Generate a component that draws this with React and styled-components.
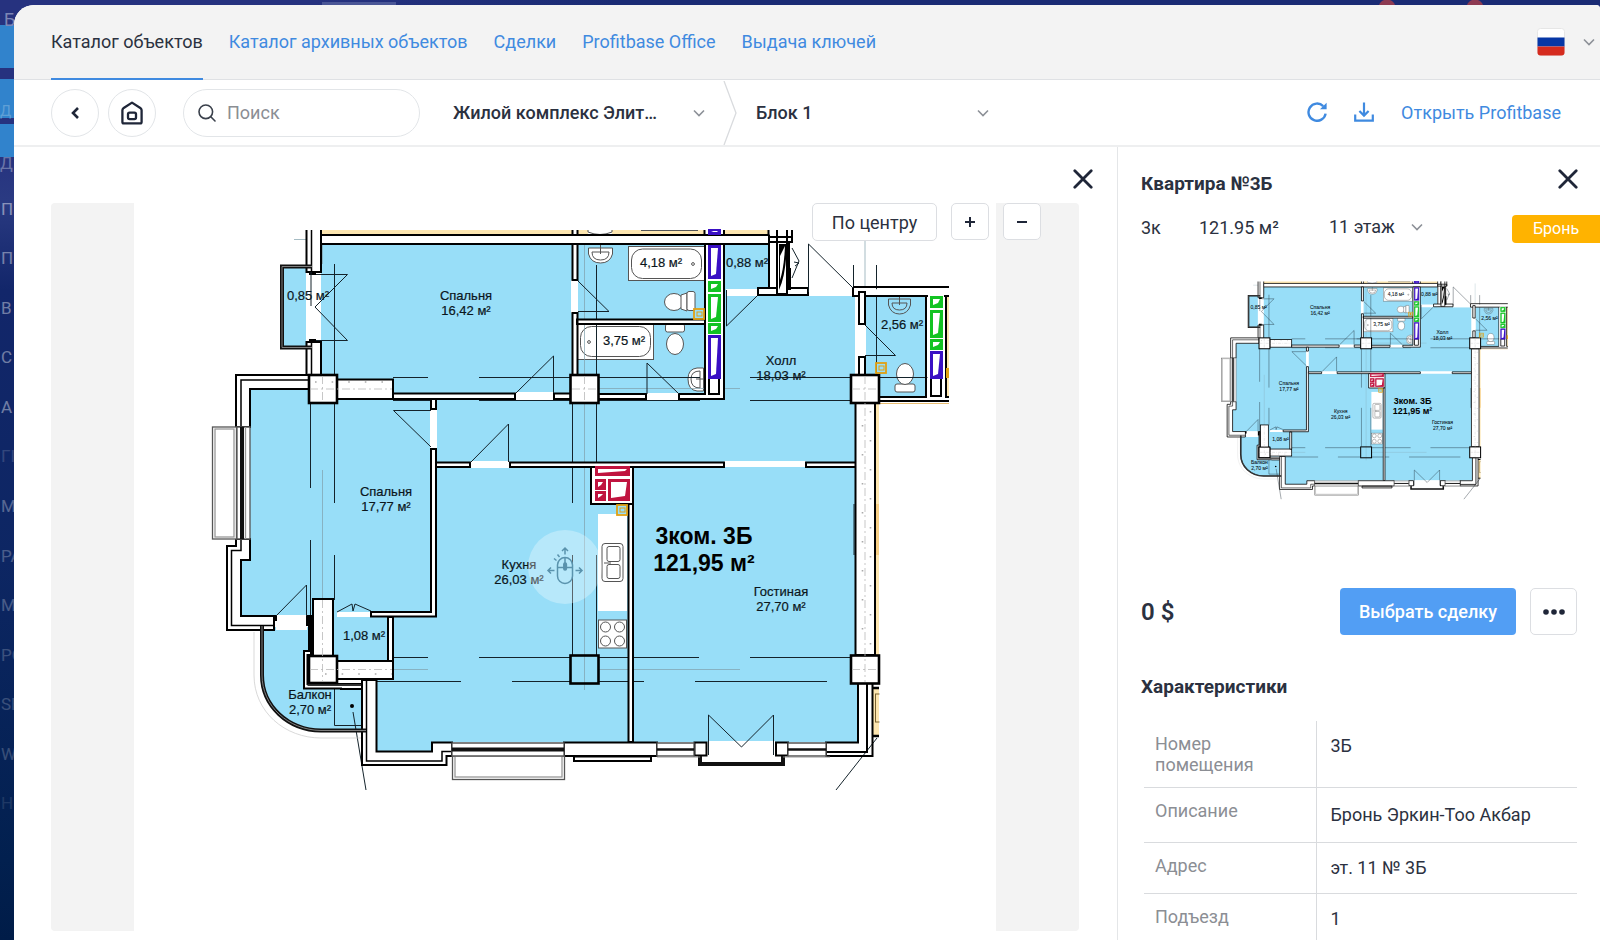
import React from 'react'
import styled, { createGlobalStyle } from 'styled-components'

const TABS = ['Каталог архивных объектов', 'Сделки', 'Profitbase Office', 'Выдача ключей']

const MENU = [
  { text: 'П', opacity: 0.45 },
  { text: 'П', opacity: 0.4 },
  { text: 'В', opacity: 0.4 },
  { text: 'С', opacity: 0.4 },
  { text: 'А', opacity: 0.4 },
  { text: 'ГІ', opacity: 0.15 },
  { text: 'М', opacity: 0.3 },
  { text: 'РА', opacity: 0.25 },
  { text: 'М', opacity: 0.25 },
  { text: 'РО', opacity: 0.2 },
  { text: 'SE', opacity: 0.2 },
  { text: 'W', opacity: 0.2 },
  { text: 'Н', opacity: 0.1 },
]

const ROWS = [
  { label: 'Номер помещения', value: '3Б' },
  { label: 'Описание', value: 'Бронь Эркин-Тоо Акбар', tall: true },
  { label: 'Адрес', value: 'эт. 11 № 3Б' },
  { label: 'Подъезд', value: '1' },
]

const Chevron = () => (
  <svg width="12" height="8" viewBox="0 0 12 8" fill="none" stroke="#8d9198" strokeWidth="1.6">
    <path d="M1 1.5 L6 6.5 L11 1.5" />
  </svg>
)

const CloseIcon = () => (
  <svg width="20" height="20" viewBox="0 0 20 20" stroke="#1f2638" strokeWidth="2.8" strokeLinecap="round">
    <path d="M1.8 1.8 L18.2 18.2 M18.2 1.8 L1.8 18.2" />
  </svg>
)

const BackIcon = () => (
  <svg width="8" height="12" viewBox="0 0 8 12" fill="none" stroke="#1f2638" strokeWidth="2.6">
    <path d="M7 1 L2 6 L7 11" />
  </svg>
)

const HomeIcon = () => (
  <svg width="22" height="24" viewBox="0 0 22 24" fill="none" stroke="#1f2638" strokeWidth="2.3" strokeLinejoin="round">
    <path d="M1.4 9.2 Q1.4 8 2.3 7.3 L11 1.6 L19.7 7.3 Q20.6 8 20.6 9.2 V21 Q20.6 22.4 19.2 22.4 H2.800 Q1.4 22.4 1.4 21 Z" />
    <rect x="7" y="11.6" width="8" height="6.6" rx="1.6" />
  </svg>
)

const SearchIcon = () => (
  <svg width="18" height="18" viewBox="0 0 18 18" fill="none" stroke="#3a404b" strokeWidth="1.6" strokeLinecap="round">
    <circle cx="7.8" cy="7.8" r="6.8" />
    <path d="M12.8 12.8 L17 17" />
  </svg>
)

const RefreshIcon = () => (
  <svg width="20" height="20" viewBox="0 0 20 20" fill="none" stroke="#3f8ae0" strokeWidth="2.4">
    <path d="M18.6 11.6 A8.6 8.6 0 1 1 16.2 4.1" />
    <path d="M19.6 0.8 V7.2 H13 Z" fill="#3f8ae0" stroke="none" />
  </svg>
)

const DownloadIcon = () => (
  <svg width="20" height="20" viewBox="0 0 20 20" fill="none" stroke="#3f8ae0" strokeWidth="2.2">
    <path d="M1.2 12.6 V18.6 H18.8 V12.6 M10 0.6 V13.4 M5.4 9 L10 13.6 L14.6 9" />
  </svg>
)

const DotsIcon = () => (
  <svg width="22" height="6" viewBox="0 0 22 6" fill="#1f2638">
    <circle cx="3" cy="3" r="2.8" />
    <circle cx="11" cy="3" r="2.8" />
    <circle cx="19" cy="3" r="2.8" />
  </svg>
)

const FlagIcon = () => (
  <svg width="28" height="28" viewBox="0 0 28 28">
    <rect x="0.5" y="0.5" width="27" height="27" rx="3" fill="#fff" stroke="#e6e6e6" />
    <path d="M0.5 9.5 H27.5 V18.5 H0.5 Z" fill="#0737a6" />
    <path d="M0.5 18.5 H27.5 V24.5 Q27.5 27.5 24.5 27.5 H3.5 Q0.5 27.5 0.5 24.5 Z" fill="#d52b1e" />
  </svg>
)

const MouseIcon = () => (
  <svg width="38" height="42" viewBox="0 0 38 42" fill="none" stroke="#5a93ad" strokeWidth="1.5">
    <rect x="11.5" y="11.5" width="15" height="26" rx="7.5" />
    <path d="M11.5 21.5 H26.5 M19 11.5 V24" />
    <rect x="17.8" y="17" width="2.6" height="7" rx="1.2" fill="#5a93ad" />
    <path d="M19 8.5 V2 M16 5 L19 2 L22 5 M8.5 24.5 H2 M5 21.5 L2 24.5 L5 27.5 M29.5 24.5 H36 M33 21.5 L36 24.5 L33 27.5" />
    <path d="M8 12.5 L10.5 14.5 M11.5 8.5 L13.5 11" />
  </svg>
)

// Ventilation shaft: coloured frame with a slanted highlight
const Shaft = ({ x, y, w, h, color }) => (
  <g>
    <rect x={x} y={y} width={w} height={h} fill={color} />
    <path d={`M${x + 2} ${y + 2} H${x + w - 2} L${x + w - 4} ${y + h - 4} L${x + 2} ${y + h - 2} Z`} fill="#fff" />
    <rect x={x} y={y} width={w} height={h} fill="none" stroke={color} strokeWidth="2" />
  </g>
)

const Sensor = ({ x, y }) => (
  <g fill="none" stroke="#e0a012">
    <rect x={x + 1} y={y + 1} width="10" height="10" strokeWidth="1.8" />
    <rect x={x + 4} y={y + 4} width="5" height="4" strokeWidth="1" />
  </g>
)

const Label = ({ x, y, lines }) => (
  <text x={x} y={y}>
    {lines.map((line, i) => (
      <tspan key={line} x={x} dy={i ? 15 : 0}>{line}</tspan>
    ))}
  </text>
)

const FloorPlan = () => (
  <PlanSvg viewBox="134 203 862 728" role="img" aria-label="План квартиры">
    <rect x="134" y="203" width="862" height="728" fill="#fff" />

    {/* rooms */}
    <g fill="#98def8">
      <path d="M320 244 H768 V296 H855 V655 H858 V742 H432 V752 H376 V680 H333 V616 H241 V560 H250 V389 H320 Z" />
      <path d="M866 296 H926 V397 H866 Z" />
      <path d="M282 266 H308 V348 H282 Z" />
      <path d="M262 627 H309 V684 H362 V730 H321 C288 730 262 706 262 675 Z" />
    </g>

    {/* neighbouring flats */}
    <g fill="#fde6b0">
      <path d="M321 230 H572 V235 H321 Z M578 230 H588 V235 H578 Z M612 230 H704 V235 H612 Z M724 230 H768 V235 H724 Z" />
      <path d="M876 404 H879 V655 H876 Z M873 688 H879 V737 H873 Z M946 296 H949 V397 H946 Z" />
    </g>
    <path d="M876 504 H879 V555 H876 Z" fill="#f7cf86" />
    <path d="M879 403.5 H949" stroke="#e8bd72" />

    {/* plumbing */}
    <g fill="#fff" stroke="#555" strokeWidth="1">
      <path d="M588 230 V232 Q600 237 612 232 V230 M641 230.5 H698" />
      <path d="M588.5 248 H612.5 V254 Q610 263 600.5 263 Q591 263 588.5 254 Z" />
      <path d="M592 252 H609 Q609 260 600.5 260 Q592 260 592 252 Z M600.5 244 V254" />
      <rect x="628.5" y="246.5" width="76" height="34" />
      <rect x="631.5" y="249" width="70" height="29.5" rx="11" />
      <circle cx="693" cy="264" r="1.4" />
      <ellipse cx="674" cy="302" rx="9.5" ry="8.5" />
      <path d="M681 295 L687 293 V311 L681 309 Z" />
      <rect x="687" y="291.5" width="8" height="19" rx="2" />
      <rect x="577.5" y="324.5" width="76" height="35" />
      <rect x="580.5" y="326.5" width="70" height="30" rx="11" />
      <circle cx="589" cy="342" r="1.4" />
      <rect x="665.5" y="324" width="19" height="8" rx="2" />
      <ellipse cx="675" cy="344" rx="8.5" ry="10.5" />
      <path d="M703.5 368 H697 Q688 369 688 379 Q688 390 697 391 H703.5 Z" />
      <path d="M700 371 Q691 371 691 379 Q691 388 700 388 Z M696 379 H705" />
      <rect x="895" y="384" width="20" height="8" rx="2" />
      <ellipse cx="905" cy="374" rx="8.5" ry="10.5" />
      <path d="M888.5 299 H910.5 V305 Q908 314 899.5 314 Q891 314 888.5 305 Z" fill="#98def8" />
      <path d="M892 303 H907 Q907 310 899.5 310 Q892 310 892 303 Z M899.5 297 V305" fill="#98def8" />
      <path d="M598 514 H627 V611 H598 Z" stroke="none" />
      <rect x="602" y="543.5" width="21" height="38" rx="3" />
      <rect x="607" y="546.5" width="13" height="15" rx="2" />
      <rect x="607" y="564.5" width="13" height="14" rx="2" />
      <path d="M604 563 H611" />
      <rect x="598.5" y="620" width="28" height="28" />
      <circle cx="605.5" cy="627" r="5" />
      <circle cx="619.5" cy="627" r="5" />
      <circle cx="605.5" cy="641" r="5" />
      <circle cx="619.5" cy="641" r="5" />
    </g>

    {/* axes */}
    <g fill="none" stroke="#14232b" strokeWidth="1">
      <path d="M334.5 264 V503 M334.5 555 V600 M310.5 272 V306 M310.5 403 V488 M310.5 540 V616" />
      <path d="M393 377.5 H428 M479 377.5 H578 M393 400.5 H430 M479 400.5 H570 M560 377.5 H700 M599 400.5 H700" />
      <path d="M750 377.5 H851 M750 400.5 H851 M879 377.5 H930 M853.5 265 V287 M876.5 265 V375" />
      <path d="M596.5 265 V503 M572.5 403 V503 M572.5 555 V655 M596.5 555 V655 M854 504 V555" />
      <path d="M393 657.5 H428 M479 657.5 H570 M599 657.5 H699 M750 657.5 H851" />
      <path d="M377 681.5 H461 M512 681.5 H570 M599 681.5 H644 M695 681.5 H827" />
      <path d="M334.5 688 V725.5 H362 M353 712 L366 790 M877 738 L836 790" />
    </g>
    <g fill="none" stroke="#7f9faa" strokeWidth="0.7">
      <path d="M294 239.5 H323 M322.5 235 V264 M322.5 470 V600 M584.5 235 V375 M584.5 403 V690 M599 388.5 H740" />
      <path d="M393 669.5 H428 M599 669.5 H740 M320 389 H393 M865 235 V286" />
      <path d="M254 632 V675 C254 712 285 738 321 738 H362" stroke="#c9c9c9" />
    </g>
    <circle cx="352" cy="706" r="2" />

    {/* door openings */}
    <g fill="#fff">
      <path d="M306 272 H321 V342 H306 Z M571 280 H578 V313 H571 Z M515 392 H554 V400 H515 Z M430 409 H437 V449 H430 Z" />
      <path d="M470 461 H510 V468 H470 Z M646 393 H679 V400 H646 Z M726 289 H758 V296 H726 Z M808 286 H853 V296 H808 Z" />
      <path d="M724 461 H806 V467 H724 Z M858 324 H866 V357 H858 Z M276 615 H307 V630 H276 Z M337 612 H371 V617 H337 Z M708 741 H775 V756 H708 Z" />
    </g>

    {/* walls */}
    <g fill="#fff" stroke="#000" strokeWidth="2">
      <path d="M320 235 H769 V244 H320 Z" />
      <path d="M306.5 230 V272 H321 V244 V230" />
      <path d="M306.5 375 V342 H321 V375" />
      <path d="M311.5 230 V272 M311.5 342 V375" strokeWidth="1.5" />
      <path d="M309 375 H236 V427 H250 V389 H309 Z" />
      <path d="M309 380 H241 V427" fill="none" strokeWidth="1.5" />
      <path d="M236 539 H250 V560 H241 V616 H274 V630 H227 V546 H236 Z" />
      <path d="M241 539 V550.5 H231.5 V625.5 H274" fill="none" strokeWidth="1.5" />
      <path d="M309 616 H312 V656 H337 V684 H362 V689 H341 V688.5 H304 V651 H309 Z" />
      <path d="M307.5 685 V655 H311 V616" fill="none" />
      <path d="M307.5 685 H362" fill="none" stroke="#333" />
      <path d="M362 680 H376.5 V751.5 H432 V742.5 H452 V756 H446.5 V765 H362 Z" />
      <path d="M366.5 680 V761 H442 V751.5 H452" fill="none" strokeWidth="1.5" />
      <rect x="313" y="599" width="20" height="58" />
      <rect x="337" y="661" width="56" height="18" />
      <rect x="337" y="379.5" width="56" height="19.5" />
      <path d="M393 393.5 H515 V399 H393 Z M554 393.5 H571 V399 H554 Z" />
      <path d="M431 399 H436 V409 H431 Z M431 449 H436 V616.5 H371 V612 H431 Z M388 617 H393 V661 H388 Z" />
      <path d="M436 462.5 H470 V467 H436 Z M510 462.5 H724 V467 H510 Z M806 462.5 H856 V467 H806 Z" />
      <path d="M572.5 244 H577.5 V280 H572.5 Z M572.5 313 H577.5 V375 H572.5 Z M577 319.5 H705 V324 H577 Z" />
      <path d="M705 244 H724 V399 H679 V394 H705 Z" />
      <path d="M577 394 H646 V399 H577 Z" />
      <path d="M572.5 230 V235 M577.5 230 V235 M704.5 230 V235 M724 230 V235 M768.5 230 V235" />
      <path d="M769 235 V294 H777 V230" />
      <path d="M758 288 H808 V295 H758 Z" />
      <path d="M769 237 H792 V242 H769 Z M777 230 V294 H787 V230 M792 230 V242 M789 242 V288" />
      <path d="M853 287 H949 M949 296 H853 V287" />
      <path d="M859 292 H865 V324 H859 Z M859 357 H865 V375 H859 Z" />
      <path d="M926 296 V397 H879 M879 401 H949 M930 296 V397 M946 296 V397 H949" fill="none" />
      <path d="M927.5 297 H929 V396 H927.5 Z" stroke="none" />
      <path d="M930 296 H942 V396 H930 Z" stroke="#fff" strokeWidth="4" />
      <path d="M709 378 H719 V394 H709 Z M931 378 H941 V396 H931 Z" />
      <path d="M591 467 H633 V504 H591 Z" />
      <path d="M628.5 504 H633 V742 H628.5 Z" />
      <path d="M855.5 403 H875 V655 H855.5 Z" />
      <path d="M858 683 H867 V752 H826 V742.5 H858 Z" />
      <path d="M826 742.5 V756 H872.5 V683" fill="none" />
      <path d="M564 742.5 H657 V756 H564 Z M574 756.5 H651 V761 H574 Z" />
      <rect x="694.5" y="742.5" width="12" height="13" />
      <rect x="776" y="742.5" width="12" height="13" />
    </g>
    <path d="M779 244 H787 Q786 275 779 290 Z M787 268 H791 V290 H787 Z" />
    <path d="M780 256 L785 246 Q784 268 780 280 Z" fill="#fff" />
    <path d="M873 736 H879 M872 688 H879" stroke="#000" strokeWidth="2.5" />
    <rect x="875.5" y="694" width="5" height="28" fill="none" stroke="#7a6230" />
    <path d="M879.5 684 H886 V740 H879.5 Z" fill="#fff" />

    {/* columns */}
    <g fill="#fff" stroke="#000" strokeWidth="2.6">
      <rect x="309" y="375" width="28" height="28" />
      <rect x="570.5" y="375" width="28" height="28" />
      <rect x="851" y="375" width="28" height="28" />
      <rect x="309" y="656" width="28" height="27" />
      <rect x="851" y="655.5" width="28" height="28" />
      <rect x="570.5" y="655.5" width="28" height="28" fill="none" />
    </g>
    <g stroke="#b9b9b9" strokeWidth="0.8" strokeDasharray="8 3 2 3" fill="none">
      <path d="M322.5 376 V402 M310 389 H392 M584.5 376 V402 M572 389 H598 M865 376 V682 M852 389 H878" />
      <path d="M322.5 600 V682 M310 669.5 H392 M852 669.5 H878" />
    </g>
    <g stroke="#aaa" strokeWidth="1.6" strokeDasharray="1.6 27.4" fill="none">
      <path d="M870.5 411 V654 M862.5 425 V654" />
      <path d="M315 382 H392 M325 674 H392" strokeDasharray="1.6 15" />
    </g>

    {/* glazing */}
    <g fill="#fff" stroke="#555" strokeWidth="1.3">
      <rect x="212.5" y="427" width="24" height="112" />
      <rect x="215" y="429" width="19" height="108" stroke="#999" />
      <rect x="452.5" y="756" width="112" height="23.5" />
      <rect x="455" y="756" width="107" height="21" stroke="#999" />
      <path d="M237 427 H250 V539 H237 Z M452 743 H564 V756 H452 Z M657 743 H694 V756 H657 Z M788 743 H826 V756 H788 Z" />
      <path d="M245.5 427 V539" stroke="#999" />
    </g>
    <g fill="none" stroke="#111" strokeWidth="4">
      <path d="M242 427 V539 M452 749.5 H564" />
      <path d="M657 749.5 H694 M788 749.5 H826" strokeWidth="2.5" />
      <path d="M700 756 V764 H783 V756" />
      <path d="M312 266.5 H282 V347.5 H312" />
      <path d="M262 626 V675 C262 706 288 730 321 730.5 H366" />
    </g>
    <g fill="none" stroke="#8a8a8a" strokeWidth="0.9">
      <path d="M312 266.5 H282 V347.5 H312 M262 626 V675 C262 706 288 730 321 730.5 H366" />
      <path d="M657 757 H700 M783 757 H830" />
    </g>
    <path d="M273 615 H277 V621 H273 Z M306 615 H310 V626 H306 Z M309 271 H316 V275 H309 Z M309 339 H316 V343 H309 Z" />

    {/* door leaves */}
    <g fill="none" stroke="#14232b" strokeWidth="1">
      <path d="M316 274.5 H347.5 L315 307 L347.5 340.5 H316 M311 272 V306" />
      <path d="M516 393 L553.5 356 V393 M431 410.5 H393.5 L431 447 M471 462 L508.5 424 V462" />
      <path d="M578 281 L609 311.5 H578 M647 394 V363 L679 394 M726.5 290 V326 L757 296" />
      <path d="M808.5 292 V244 L853 288 M865 325 L895.5 355.5 H865" />
      <path d="M276 616 L306.5 585 V616 M337 612 L352 604 L353 611 L355 604 L371 611" />
      <path d="M708.5 755 V715 L741.5 747 L773.5 715 V755" />
      <path d="M792 248 L799 261 L792 278 M794 262 L799 263 L795 266" />
    </g>

    {/* shafts */}
    <Shaft x={709} y={246} w={11} h={32} color="#3a10c4" />
    <Shaft x={709} y={230} w={11} h={4} color="#3a10c4" />
    <Shaft x={709} y={282} w={11} h={9} color="#12c322" />
    <Shaft x={709} y={295} w={11} h={26} color="#12c322" />
    <Shaft x={709} y={324} w={11} h={9} color="#12c322" />
    <Shaft x={709} y={336} w={11} h={42} color="#3a10c4" />
    <Shaft x={931} y={297} w={11} h={10} color="#12c322" />
    <Shaft x={931} y={311} w={11} h={26} color="#12c322" />
    <Shaft x={931} y={340} w={11} h={9} color="#12c322" />
    <Shaft x={931} y={352} w={11} h={26} color="#3a10c4" />
    <Shaft x={596} y={467} w={33} h={8} color="#c0143f" />
    <Shaft x={596} y={480} w={9} h={9} color="#c0143f" />
    <Shaft x={596} y={492} w={9} h={8} color="#c0143f" />
    <Shaft x={609} y={480} w={20} h={20} color="#c0143f" />
    <Sensor x={693} y={308} />
    <Sensor x={875} y={362} />
    <Sensor x={616} y={504} />
    <path d="M946 368 H949 V378 H946 Z" fill="#e0a012" />

    {/* captions */}
    <g fontFamily="'Liberation Sans', Arial, sans-serif" fontSize="13" textAnchor="middle" fill="#0b161c" stroke="#0b161c" strokeWidth="0.2">
      <Label x={308} y={300} lines={['0,85 м²']} />
      <Label x={466} y={300} lines={['Спальня', '16,42 м²']} />
      <Label x={661} y={267} lines={['4,18 м²']} />
      <Label x={747} y={267} lines={['0,88 м²']} />
      <Label x={624} y={345} lines={['3,75 м²']} />
      <Label x={902} y={329} lines={['2,56 м²']} />
      <Label x={781} y={365} lines={['Холл', '18,03 м²']} />
      <Label x={386} y={496} lines={['Спальня', '17,77 м²']} />
      <Label x={519} y={569} lines={['Кухня', '26,03 м²']} />
      <Label x={364} y={640} lines={['1,08 м²']} />
      <Label x={310} y={699} lines={['Балкон', '2,70 м²']} />
      <Label x={781} y={596} lines={['Гостиная', '27,70 м²']} />
      <g fontSize="23" fontWeight="700" fill="#000" stroke="none">
        <text x="704" y="544">3ком. 3Б</text>
        <text x="704" y="571">121,95 м²</text>
      </g>
    </g>
  </PlanSvg>
)

const SelectBox = ({ label, width, children }) => (
  <SelectWrap $width={width}>
    <Select aria-label={label}>
      <option>{children}</option>
    </Select>
    <Chevron />
  </SelectWrap>
)

const App = () => {
  return (
    <Shell>
      <GlobalStyle />
      <Sidebar>
        <SideTop>Б</SideTop>
        <SideTile $height={43} $gap={0} />
        <SideTile $height={39} $gap={11}>Д</SideTile>
        <SideTile $height={33} $gap={6} />
        <SideMark>Д</SideMark>
        <SideMenu>
          {MENU.map((item, i) => (
            <SideItem key={i} $opacity={item.opacity}>{item.text}</SideItem>
          ))}
        </SideMenu>
      </Sidebar>

      <Modal>
        <Header>
          <Tabs>
            <Tab href="#" $active>Каталог объектов</Tab>
            {TABS.map((tab) => (
              <Tab href="#" key={tab}>{tab}</Tab>
            ))}
          </Tabs>
          <LangButton aria-label="Язык">
            <FlagIcon />
            <Chevron />
          </LangButton>
        </Header>

        <Toolbar>
          <RoundButton aria-label="Назад"><BackIcon /></RoundButton>
          <RoundButton aria-label="Домой"><HomeIcon /></RoundButton>
          <SearchBox>
            <SearchIcon />
            <SearchInput type="search" placeholder="Поиск" aria-label="Поиск" />
          </SearchBox>
          <SelectBox label="Проект" width={252}>Жилой комплекс Элит…</SelectBox>
          <Separator width="15" height="64" viewBox="0 0 15 64" fill="none" stroke="#d9dbde" strokeWidth="1.3">
            <path d="M1 0 L13 32 L1 64" />
          </Separator>
          <SelectBox label="Дом" width={233}>Блок 1</SelectBox>
          <ToolbarActions>
            <IconButton aria-label="Обновить"><RefreshIcon /></IconButton>
            <IconButton aria-label="Скачать"><DownloadIcon /></IconButton>
            <OpenLink href="#">Открыть Profitbase</OpenLink>
          </ToolbarActions>
        </Toolbar>

        <Content>
          <Viewer>
            <ViewerTop>
              <IconButton aria-label="Закрыть план"><CloseIcon /></IconButton>
            </ViewerTop>
            <Canvas>
              <FloorPlan />
              <Hint><MouseIcon /></Hint>
              <ViewControls>
                <CenterButton>По центру</CenterButton>
                <ZoomButton aria-label="Увеличить">
                  <svg width="10" height="10" viewBox="0 0 10 10" stroke="#1f2638" strokeWidth="2"><path d="M0 5 H10 M5 0 V10" /></svg>
                </ZoomButton>
                <ZoomButton aria-label="Уменьшить">
                  <svg width="10" height="10" viewBox="0 0 10 10" stroke="#1f2638" strokeWidth="2"><path d="M0 5 H10" /></svg>
                </ZoomButton>
              </ViewControls>
            </Canvas>
          </Viewer>

          <Details>
            <DetailsHead>
              <Title>Квартира №3Б</Title>
              <IconButton aria-label="Закрыть"><CloseIcon /></IconButton>
            </DetailsHead>
            <Facts>
              <Fact $width={58}>3к</Fact>
              <Fact $width={130}>121.95 м²</Fact>
              <FloorSelect>
                <SelectBox label="Этаж" width={94}>11 этаж</SelectBox>
              </FloorSelect>
              <Badge>Бронь</Badge>
            </Facts>
            <Thumb><FloorPlan /></Thumb>
            <PriceRow>
              <Price>0 $</Price>
              <PrimaryButton>Выбрать сделку</PrimaryButton>
              <MoreButton aria-label="Ещё"><DotsIcon /></MoreButton>
            </PriceRow>
            <SectionTitle>Характеристики</SectionTitle>
            <Table>
              <tbody>
                {ROWS.map((row) => (
                  <tr key={row.label}>
                    <LabelCell scope="row">{row.label}</LabelCell>
                    <ValueCell $tall={row.tall}>{row.value}</ValueCell>
                  </tr>
                ))}
              </tbody>
            </Table>
          </Details>
        </Content>
      </Modal>
    </Shell>
  )
}

const GlobalStyle = createGlobalStyle`
  * {
    box-sizing: border-box;
  }
  body {
    margin: 0;
    background: #1b2a6b;
    color: #2b3140;
    font-family: Roboto, 'Noto Sans', sans-serif;
    font-size: 18px;
  }
  button, input, select {
    font-family: inherit;
    color: inherit;
  }
  svg {
    display: block;
    flex-shrink: 0;
  }
`

const Shell = styled.div`
  display: flex;
  height: 100vh;
  overflow: hidden;
  background:
    radial-gradient(circle at calc(100% - 213px) 8px, #8d3a52 8px, transparent 9px),
    radial-gradient(circle at calc(100% - 125px) 8px, #8d3a52 8px, transparent 9px),
    linear-gradient(#4a5696, #4a5696) 322px 2px / 74px 3px no-repeat,
    linear-gradient(90deg, #26327f 300px, #1a2b74 600px, #1a2b74) 14px 0 / 100% 5px no-repeat,
    linear-gradient(#26327f, #26327f 150px, #2a3a82 200px, #12266a 290px, #0d2663 560px, #02204f 860px, #001c48);
`

const Sidebar = styled.aside`
  width: 14px;
  flex-shrink: 0;
  overflow: hidden;
  white-space: nowrap;
  color: #fff;
`

const SideTop = styled.div`
  height: 25px;
  padding: 8px 0 0 4px;
  font-size: 18px;
  line-height: 24px;
  color: #7d86b5;
`

const SideTile = styled.div`
  display: flex;
  align-items: flex-end;
  height: ${(props) => props.$height}px;
  margin-top: ${(props) => props.$gap}px;
  background: #3183cc;
  color: #5f9fd6;
  font-size: 15px;
  line-height: 14px;
`

const SideMark = styled.div`
  height: 14px;
  color: #6a75a8;
  font-size: 17px;
  line-height: 12px;
`

const SideMenu = styled.ul`
  display: grid;
  grid-auto-rows: 1fr;
  height: 644px;
  margin: 13px 0 0;
  padding: 0 0 0 1px;
  list-style: none;
`

const SideItem = styled.li`
  display: flex;
  align-items: center;
  font-size: 17px;
  opacity: ${(props) => props.$opacity};
`

const Modal = styled.main`
  flex: 1;
  min-width: 0;
  display: flex;
  flex-direction: column;
  margin-top: 5px;
  background: #fff;
  border-radius: 20px 4px 0 0;
  overflow: hidden;
`

const Header = styled.header`
  display: flex;
  align-items: stretch;
  justify-content: space-between;
  height: 75px;
  padding: 0 5px 0 37px;
  background: #f3f3f3;
  border-bottom: 1px solid #dfe1e4;
  flex-shrink: 0;
`

const Tabs = styled.nav`
  display: flex;
  gap: 26px;
`

const Tab = styled.a`
  display: flex;
  align-items: center;
  margin-bottom: -1px;
  border-bottom: 2px solid ${(props) => (props.$active ? '#3f8ae0' : 'transparent')};
  color: ${(props) => (props.$active ? '#2b3140' : '#3f8ae0')};
  text-decoration: none;
  white-space: nowrap;
`

const LangButton = styled.button`
  display: flex;
  align-items: center;
  gap: 18px;
  padding: 0;
  border: 0;
  background: none;
`

const Toolbar = styled.div`
  display: flex;
  align-items: center;
  height: 67px;
  padding: 0 39px 0 37px;
  border-bottom: 2px solid #eeeff0;
  flex-shrink: 0;
`

const RoundButton = styled.button`
  display: grid;
  place-items: center;
  width: 48px;
  height: 48px;
  margin-right: 9px;
  padding: 0;
  border: 1px solid #e2e5e8;
  border-radius: 50%;
  background: #fff;
`

const SearchBox = styled.label`
  display: flex;
  align-items: center;
  gap: 11px;
  width: 237px;
  height: 48px;
  margin: 0 33px 0 18px;
  padding: 0 14px;
  border: 1px solid #e2e5e8;
  border-radius: 24px;
`

const SearchInput = styled.input`
  flex: 1;
  min-width: 0;
  padding: 0;
  border: 0;
  outline: 0;
  background: none;
  font-size: 18px;

  &::placeholder {
    color: #8b8e94;
    opacity: 1;
  }
`

const SelectWrap = styled.div`
  display: grid;
  grid-template-columns: 1fr 12px;
  align-items: center;
  width: ${(props) => props.$width}px;

  svg {
    grid-area: 1 / 2;
    pointer-events: none;
  }
`

const Select = styled.select`
  grid-area: 1 / 1 / 2 / 3;
  width: 100%;
  padding: 0 16px 0 0;
  border: 0;
  outline: 0;
  background: none;
  appearance: none;
  font-size: 18px;
  font-weight: 500;
  line-height: 24px;
`

const Separator = styled.svg`
  margin: 0 18px;
`

const ToolbarActions = styled.div`
  display: flex;
  align-items: center;
  gap: 27px;
  margin-left: auto;
`

const IconButton = styled.button`
  display: block;
  align-self: flex-start;
  padding: 0;
  border: 0;
  background: none;
`

const OpenLink = styled.a`
  color: #3f8ae0;
  text-decoration: none;
`

const Content = styled.div`
  display: flex;
  flex: 1;
  min-height: 0;
`

const Viewer = styled.section`
  display: flex;
  flex-direction: column;
  flex: 1;
  min-width: 0;
  padding: 0 38px 9px 37px;
`

const ViewerTop = styled.div`
  display: flex;
  justify-content: flex-end;
  height: 56px;
  padding-top: 22px;
  margin-right: -14px;
`

const Canvas = styled.div`
  position: relative;
  display: flex;
  justify-content: center;
  flex: 1;
  min-height: 0;
  background: #f3f3f3;
  border-radius: 4px;
`

const PlanSvg = styled.svg`
  height: 100%;
  max-width: 100%;
`

const Hint = styled.div`
  position: absolute;
  top: 50%;
  left: 50%;
  display: grid;
  place-items: center;
  width: 74px;
  height: 74px;
  transform: translate(-50%, -50%);
  border-radius: 50%;
  background: rgba(255, 255, 255, 0.3);
  pointer-events: none;
`

const ViewControls = styled.div`
  position: absolute;
  top: 0;
  right: 38px;
  display: flex;
  gap: 14px;
`

const ZoomButton = styled.button`
  display: grid;
  place-items: center;
  width: 38px;
  height: 37px;
  padding: 0;
  border: 1px solid #dcdee2;
  border-radius: 5px;
  background: #fff;
`

const CenterButton = styled(ZoomButton)`
  width: 125px;
  height: 38px;
  font-size: 18px;
`

const Details = styled.section`
  width: 483px;
  flex-shrink: 0;
  padding-left: 23px;
  border-left: 1px solid #e4e6e8;
  overflow: hidden;
`

const DetailsHead = styled.div`
  display: flex;
  justify-content: space-between;
  padding: 22px 22px 0 0;
`

const Title = styled.h1`
  margin: 3px 0 0;
  font-size: 19px;
  font-weight: 700;
  line-height: 24px;
`

const Facts = styled.div`
  display: flex;
  align-items: flex-start;
  height: 28px;
  margin-top: 19px;
  line-height: 26px;
`

const Fact = styled.span`
  width: ${(props) => props.$width}px;
`

const FloorSelect = styled.div`
  select {
    font-weight: 400;
  }
`

const Badge = styled.span`
  width: 88px;
  margin-left: auto;
  padding-left: 21px;
  border-radius: 4px 0 0 4px;
  background: #ffb300;
  color: #fff;
  font-size: 16px;
  line-height: 28px;
`

const Thumb = styled.div`
  display: flex;
  justify-content: center;
  height: 283px;
  margin: 28px 0 34px -23px;
`

const PriceRow = styled.div`
  display: flex;
  align-items: center;
  gap: 14px;
  padding-right: 23px;
`

const Price = styled.strong`
  margin-right: auto;
  font-size: 24px;
  font-weight: 600;
`

const PrimaryButton = styled.button`
  width: 176px;
  height: 47px;
  padding: 0;
  border: 0;
  border-radius: 4px;
  background: #529ef4;
  color: #fff;
  font-size: 18px;
  font-weight: 500;
`

const MoreButton = styled(ZoomButton)`
  width: 47px;
  height: 47px;
`

const SectionTitle = styled.h2`
  margin: 40px 0 22px;
  font-size: 19px;
  font-weight: 700;
  line-height: 24px;
`

const Table = styled.table`
  width: calc(100% - 26px);
  margin-left: 3px;
  border-collapse: collapse;
  table-layout: fixed;
`

const LabelCell = styled.th`
  width: 172px;
  padding: 12px 12px 12px 11px;
  border-bottom: 1px solid #d9dbde;
  border-right: 1px solid #d9dbde;
  color: #8b8e94;
  font-weight: 400;
  line-height: 21px;
  text-align: left;
  vertical-align: top;
`

const ValueCell = styled.td`
  padding: ${(props) => (props.$tall ? 16 : 14)}px;
  padding-left: 14px;
  border-bottom: 1px solid #d9dbde;
  line-height: 22px;
  vertical-align: top;
`

export default App
